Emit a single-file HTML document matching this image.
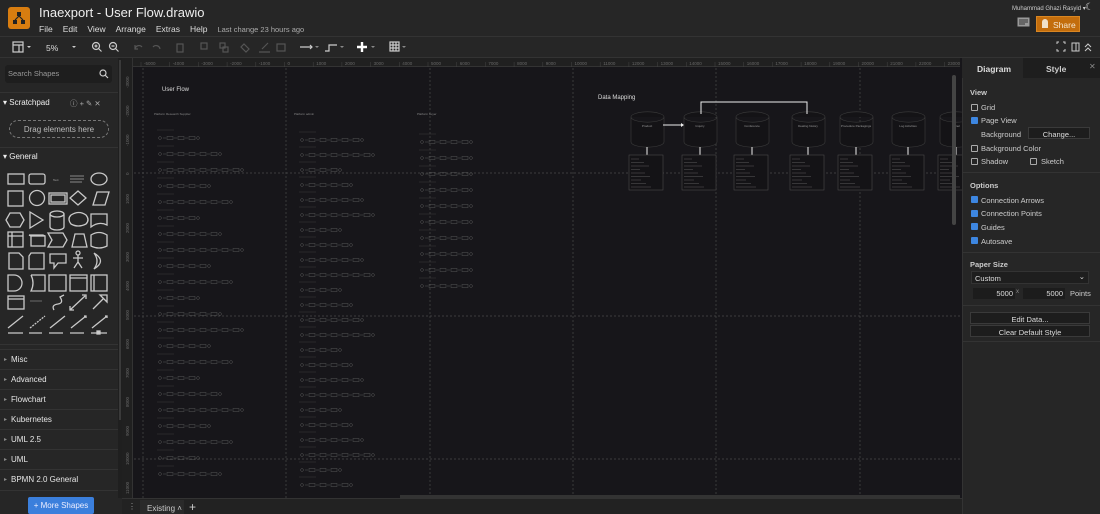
<!DOCTYPE html>
<html><head><meta charset="utf-8"><style>
*{box-sizing:border-box;margin:0;padding:0}
body{width:1100px;height:514px;overflow:hidden;background:#262626;font-family:"Liberation Sans",sans-serif;color:#ddd;position:relative;font-size:9px}
.a{position:absolute}
.menu span{margin-right:10px}
.sec{position:absolute;left:0;width:118px;height:20px;border-top:1px solid #333;font-size:8px;color:#e6e6e6;padding:5px 0 0 11px}
.sec:before{content:"▸";position:absolute;left:4px;color:#888;font-size:6px;top:6px}
.cb{position:absolute;width:7px;height:7px;border:1px solid #aaa;border-radius:1px}
.cb.on{background:#3d86e0;border-color:#3d86e0}
.rt{position:absolute;font-size:7.5px;color:#ccc}
.hdr{position:absolute;font-size:7.5px;font-weight:bold;color:#ccc}
.btn{position:absolute;background:#1d1d1d;border:1px solid #3a3a3a;color:#ddd;font-size:7.5px;text-align:center}
</style></head><body>
<div class="a" style="left:8px;top:7px;width:22px;height:22px;background:#d87d10;border-radius:3px"></div>
<svg class="a" style="left:10px;top:9px" width="18" height="18"><g fill="#222"><rect x="7" y="3" width="4" height="4"/><rect x="3" y="11" width="4" height="4"/><rect x="11" y="11" width="4" height="4"/></g><path d="M9 7L5 11M9 7L13 11" stroke="#222" stroke-width="1.2"/></svg>
<div class="a" style="left:39px;top:5px;font-size:13px;color:#eee">Inaexport - User Flow.drawio</div>
<div class="a menu" style="left:39px;top:24px;font-size:8.5px;color:#ddd;white-space:nowrap"><span>File</span><span>Edit</span><span>View</span><span>Arrange</span><span>Extras</span><span>Help</span><span style="font-size:7.5px;color:#aaa">Last change 23 hours ago</span></div>
<div class="a" style="left:1012px;top:5px;font-size:6px;color:#ccc">Muhammad Ghazi Rasyid ▾</div>
<div class="a" style="left:1085px;top:2px;font-size:10px;color:#ccc">☾</div>
<svg class="a" style="left:1017px;top:17px" width="13" height="12"><rect x="0.5" y="0.5" width="12" height="9" fill="#999"/><path d="M2 3h9M2 5h9M2 7h6" stroke="#333"/></svg>
<div class="a" style="left:1036px;top:16px;width:44px;height:16px;background:#c36d0c;border:1px solid #d98622;font-size:8.5px;color:#f5e6d0;padding:3px 0 0 16px">Share</div>
<div class="a" style="left:1042px;top:19px;width:6px;height:9px;background:#f0e0c8;border-radius:3px 3px 0 0"></div>
<div class="a" style="left:0;top:36px;width:1100px;height:1px;background:#333"></div>
<svg class="a" style="left:0;top:38px" width="420" height="20" fill="none" stroke="#ccc" stroke-width="1.2">
<rect x="13" y="4" width="10" height="10"/><path d="M13 7h10M19 7v7"/><path d="M27 8l2 2 2-2" fill="#ccc" stroke="none"/>
<text x="46" y="13" fill="#ddd" stroke="none" font-size="8.5" font-family="Liberation Sans">5%</text><path d="M72 8l2 2 2-2" fill="#ccc" stroke="none"/>
<circle cx="96" cy="8" r="3.5"/><path d="M98.5 10.5l3 3M94.5 8h3M96 6.5v3"/>
<circle cx="113" cy="8" r="3.5"/><path d="M115.5 10.5l3 3M111.5 8h3"/>
<g stroke="#555"><path d="M135 11a4 4 0 0 1 7-2M135 7v4h3"/><path d="M160 11a4 4 0 0 0-7-2"/><rect x="177" y="6" width="6" height="8"/><rect x="201" y="5" width="6" height="6"/><rect x="220" y="5" width="5" height="5"/><rect x="223" y="9" width="5" height="5"/><path d="M244 6l5 5-3 3-5-5z"/><path d="M259 14h11M262 11l6-6"/><rect x="277" y="6" width="8" height="7"/></g>
<path d="M300 9h12M310 7l2 2-2 2"/><path d="M325 13h4v-6h8"/><path d="M362 4v10M357 9h10" stroke-width="2.4" stroke="#fff"/>
<rect x="390" y="4" width="9" height="9"/><path d="M390 7h9M390 10h9M393 4v9M396 4v9"/>
<g fill="#888" stroke="none"><path d="M315 8l2 2 2-2z"/><path d="M340 8l2 2 2-2z"/><path d="M371 8l2 2 2-2z"/><path d="M402 8l2 2 2-2z"/></g>
</svg>
<svg class="a" style="left:1055px;top:40px" width="40" height="14" fill="none" stroke="#ccc"><path d="M2 4V2h2M8 2h2v2M10 9v2H8M4 11H2V9"/><rect x="17" y="3" width="7" height="8"/><path d="M21 3v8"/><path d="M30 7l3-3 3 3M30 11l3-3 3 3"/></svg>
<div class="a" style="left:0;top:57px;width:1100px;height:1px;background:#333"></div>
<div class="a" style="left:0;top:58px;width:118px;height:456px;background:#262626"></div>
<div class="a" style="left:5px;top:65px;width:107px;height:18px;background:#1e1e1e;border-radius:3px;font-size:7.5px;color:#999;padding:4px 0 0 3px">Search Shapes</div>
<svg class="a" style="left:99px;top:69px" width="10" height="10" fill="none" stroke="#ccc" stroke-width="1.2"><circle cx="4" cy="4" r="3"/><path d="M6 6l3 3"/></svg>
<div class="a" style="left:0;top:92px;width:118px;height:1px;background:#333"></div>
<div class="a" style="left:3px;top:98px;font-size:8px;color:#eee">▾ Scratchpad</div>
<div class="a" style="left:70px;top:98px;font-size:7.5px;color:#aaa">ⓘ + ✎ ✕</div>
<div class="a" style="left:9px;top:120px;width:100px;height:18px;border:1px dashed #777;border-radius:9px;font-size:8px;color:#bbb;text-align:center;padding-top:4px">Drag elements here</div>
<div class="a" style="left:0;top:147px;width:118px;height:1px;background:#333"></div>
<div class="a" style="left:3px;top:152px;font-size:8px;color:#eee">▾ General</div>
<svg class="a" style="left:0;top:165px" width="118" height="178" fill="none" stroke="#c9c9c9" stroke-width="1.3">
<rect x="8" y="9" width="16" height="10"/><rect x="29" y="9" width="16" height="10" rx="2"/><text x="53" y="16" fill="#aaa" stroke="none" font-size="3">Text</text><path d="M70 11h14M70 14h14M70 17h12" stroke="#888" stroke-width="1"/><ellipse cx="99" cy="14" rx="8" ry="6"/>
<rect x="8" y="26" width="15" height="15"/><circle cx="37" cy="33" r="7.5"/><rect x="49" y="28" width="18" height="11"/><rect x="51" y="30" width="14" height="7"/><path d="M78 26l8 7-8 7-8-7z"/><path d="M93 40l4-13h12l-4 13z"/>
<path d="M10 48h10l4 7-4 7H10l-4-7z"/><path d="M30 47l13 8-13 8z"/><path d="M50 49a7 3 0 0 1 14 0v13a7 3 0 0 1-14 0zM50 49a7 3 0 0 0 14 0"/><path d="M71 50q8-5 15 0q4 5 0 9q-8 4-15 0q-4-5 0-9"/><path d="M91 49h16v11q-8-4-16 2z"/>
<rect x="8" y="67" width="15" height="15"/><path d="M8 71h15M12 67v15"/><rect x="31" y="71" width="14" height="10"/><path d="M29 70l2 1M29 70h14l2 1"/><path d="M48 68h15l4 7-4 7H48l4-7z"/><path d="M72 82l3-13h9l3 13z"/><path d="M91 70q8-5 16 0v11q-8 4-16 0z"/>
<path d="M9 88h10l4 4v12H9z"/><path d="M31 88h13v16H29V91z"/><path d="M50 89h16v9h-8l-4 5v-5h-4z"/><circle cx="78" cy="88" r="2"/><path d="M78 90v7M73 93h10M78 97l-4 6M78 97l4 6"/><path d="M94 88q13 8 0 16q6-8 0-16"/>
<path d="M8 110h6a8 8 0 0 1 0 16H8z"/><path d="M31 110h14v16H31q4-8 0-16"/><rect x="49" y="110" width="17" height="16"/><rect x="70" y="110" width="17" height="16"/><path d="M70 113h17"/><rect x="91" y="110" width="16" height="16"/><path d="M94 110v16"/>
<rect x="8" y="131" width="16" height="13"/><path d="M8 134h16" /><path d="M30 136h12" stroke="#888" stroke-width="0.7"/><path d="M54 145q-3-5 4-6q6-1 2-7l4-2" /><path d="M70 145l15-14M82 130l4 0 0 4M70 141l0 4 4 0"/><path d="M93 144l10-10M100 130l7 0 0 7z"/>
<path d="M8 163l15-12M50 163l15-12M71 163l15-12M92 163l15-12M84 151l2 0 0 2M105 151l2 0 0 2"/><path d="M30 163l15-12" stroke-dasharray="2 1"/>
<path d="M8 168h15M29 168h13M49 168h14M70 168h14M91 168h16" /><rect x="97" y="166" width="3" height="3" fill="#ccc"/>
</svg>
<div class="a" style="left:0;top:344px;width:118px;height:1px;background:#333"></div>
<div class="sec" style="top:349px">Misc</div><div class="sec" style="top:369px">Advanced</div><div class="sec" style="top:389px">Flowchart</div><div class="sec" style="top:409px">Kubernetes</div><div class="sec" style="top:429px">UML 2.5</div><div class="sec" style="top:449px">UML</div><div class="sec" style="top:469px">BPMN 2.0 General</div>
<div class="a" style="left:0;top:490px;width:118px;height:1px;background:#333"></div>
<div class="a" style="left:28px;top:497px;width:66px;height:17px;background:#3b7fdc;border-radius:2px;font-size:8px;color:#eef;text-align:center;padding-top:4px">+ More Shapes</div>
<div class="a" style="left:118px;top:58px;width:4px;height:440px;background:#1f1f1f"></div>
<div class="a" style="left:119px;top:60px;width:2px;height:360px;background:#3a3a3a"></div>
<div class="a" style="left:122px;top:58px;width:840px;height:440px;background:#17161a"></div>
<div class="a" style="left:133px;top:58px;width:827px;height:9px;background:#202020;border-bottom:1px solid #333"></div>
<div class="a" style="left:122px;top:58px;width:11px;height:440px;background:#202020;border-right:1px solid #333"></div>
<svg class="a" style="left:122px;top:58px" width="840" height="440" id="cv" font-family="Liberation Sans"></svg>
<div class="a" style="left:952px;top:75px;width:4px;height:150px;background:#444;border-radius:2px"></div>
<div class="a" style="left:400px;top:495px;width:560px;height:3px;background:#333"></div>
<div class="a" style="left:122px;top:498px;width:840px;height:16px;background:#222;border-top:1px solid #333"></div>
<div class="a" style="left:128px;top:502px;font-size:8px;color:#999">⋮</div>
<div class="a" style="left:140px;top:500px;width:44px;height:14px;background:#2a2a2a;font-size:8px;color:#ccc;padding:4px 0 0 7px">Existing ˄</div>
<div class="a" style="left:189px;top:500px;font-size:12px;color:#ccc">+</div>
<div class="a" style="left:962px;top:58px;width:138px;height:456px;background:#262626;border-left:1px solid #333"></div>
<div class="a" style="left:962px;top:58px;width:61px;height:20px;background:#262626;font-size:8.5px;font-weight:bold;color:#ddd;padding:6px 0 0 15px">Diagram</div>
<div class="a" style="left:1023px;top:58px;width:77px;height:20px;background:#1e1e1e;font-size:8.5px;font-weight:bold;color:#ccc;padding:6px 0 0 23px">Style</div>
<div class="a" style="left:1089px;top:62px;font-size:8px;color:#888">✕</div>
<div class="hdr" style="left:970px;top:88px">View</div>
<div class="cb" style="left:971px;top:104px"></div><div class="rt" style="left:981px;top:103px">Grid</div>
<div class="cb on" style="left:971px;top:117px"></div><div class="rt" style="left:981px;top:116px">Page View</div>
<div class="rt" style="left:981px;top:130px">Background</div>
<div class="btn" style="left:1028px;top:127px;width:62px;height:12px;padding-top:2px">Change...</div>
<div class="cb" style="left:971px;top:145px"></div><div class="rt" style="left:981px;top:144px">Background Color</div>
<div class="cb" style="left:971px;top:158px"></div><div class="rt" style="left:981px;top:157px">Shadow</div>
<div class="cb" style="left:1030px;top:158px"></div><div class="rt" style="left:1041px;top:157px">Sketch</div>
<div class="a" style="left:962px;top:172px;width:138px;height:1px;background:#333"></div>
<div class="hdr" style="left:970px;top:181px">Options</div>
<div class="cb on" style="left:971px;top:196px"></div><div class="rt" style="left:981px;top:196px">Connection Arrows</div>
<div class="cb on" style="left:971px;top:210px"></div><div class="rt" style="left:981px;top:209px">Connection Points</div>
<div class="cb on" style="left:971px;top:223px"></div><div class="rt" style="left:981px;top:223px">Guides</div>
<div class="cb on" style="left:971px;top:237px"></div><div class="rt" style="left:981px;top:237px">Autosave</div>
<div class="a" style="left:962px;top:252px;width:138px;height:1px;background:#333"></div>
<div class="hdr" style="left:970px;top:260px">Paper Size</div>
<div class="a" style="left:971px;top:271px;width:118px;height:13px;background:#1e1e1e;border:1px solid #333;font-size:7.5px;color:#ddd;padding:2px 0 0 3px">Custom<span style="position:absolute;right:3px;top:0">⌄</span></div>
<div class="a" style="left:973px;top:288px;width:42px;height:11px;background:#1c1c1c;font-size:7.5px;color:#ddd;text-align:right;padding:1px 2px 0 0">5000</div>
<div class="a" style="left:1016px;top:289px;font-size:6px;color:#888">x</div>
<div class="a" style="left:1023px;top:288px;width:42px;height:11px;background:#1c1c1c;font-size:7.5px;color:#ddd;text-align:right;padding:1px 2px 0 0">5000</div>
<div class="rt" style="left:1070px;top:289px">Points</div>
<div class="a" style="left:962px;top:305px;width:138px;height:1px;background:#333"></div>
<div class="btn" style="left:970px;top:312px;width:120px;height:12px;padding-top:2px">Edit Data...</div>
<div class="btn" style="left:970px;top:325px;width:120px;height:12px;padding-top:2px">Clear Default Style</div>
<div class="a" style="left:962px;top:341px;width:138px;height:1px;background:#333"></div>
<script>
var s='';
var labs=['-5000','-4000','-3000','-2000','-1000','0','1000','2000','3000','4000','5000','6000','7000','8000','9000','10000','11000','12000','13000','14000','15000','16000','17000','18000','19000','20000','21000','22000','23000'];
for(var i=0;i<labs.length;i++){var x=22+i*28.7;s+='<text x="'+x+'" y="7" fill="#666" font-size="4.5">'+labs[i]+'</text><line x1="'+(x-3)+'" y1="4" x2="'+(x-3)+'" y2="9" stroke="#444" stroke-width=".5"/>';}
for(var j=0;j<15;j++){var y=30+j*29;s+='<text x="7" y="'+y+'" fill="#666" font-size="4.5" transform="rotate(-90 7 '+y+')">'+(j*1000-3000)+'</text>';}
[21,164,308,451,594,738].forEach(function(x){s+='<line x1="'+x+'" y1="10" x2="'+x+'" y2="440" stroke="#4a4a4a" stroke-width=".7" stroke-dasharray="2 2"/>';});
[115,258,401].forEach(function(y){s+='<line x1="12" y1="'+y+'" x2="840" y2="'+y+'" stroke="#4a4a4a" stroke-width=".7" stroke-dasharray="2 2"/>';});
s+='<text x="40" y="33" fill="#ddd" font-size="6">User Flow</text><text x="476" y="41" fill="#ddd" font-size="6">Data Mapping</text>';
function row(x,y,n){var c='#5e5e5e';var r='<circle cx="'+x+'" cy="'+y+'" r="1.4" fill="none" stroke="'+c+'" stroke-width=".45"/>';var cx=x+3;for(var k=0;k<n;k++){r+='<line x1="'+cx+'" y1="'+y+'" x2="'+(cx+3)+'" y2="'+y+'" stroke="'+c+'" stroke-width=".45"/><rect x="'+(cx+4)+'" y="'+(y-1.5)+'" width="6" height="3" fill="none" stroke="'+c+'" stroke-width=".45"/>';cx+=11;}r+='<circle cx="'+(cx+2)+'" cy="'+y+'" r="1.4" fill="none" stroke="'+c+'" stroke-width=".45"/>';r+='<line x1="'+(x-3)+'" y1="'+(y-8)+'" x2="'+(x+14)+'" y2="'+(y-8)+'" stroke="#3a3a3a" stroke-width=".5"/>';return r;}
var y;for(y=80;y<430;y+=16)s+=row(38,y,(y*7)%5+3);
for(y=82;y<435;y+=15)s+=row(180,y,(y*3)%4+3);
for(y=84;y<240;y+=16)s+=row(300,y,(y*5)%4+4);
s+='<text x="32" y="57" fill="#888" font-size="3">Platform Research Supplier</text><text x="172" y="57" fill="#888" font-size="3">Platform admin</text><text x="295" y="57" fill="#888" font-size="3">Platform buyer</text>';
var cyl=[[509,'Product'],[562,'Inquiry'],[614,'Conference'],[670,'Dealing history'],[718,'Procedure Packagings'],[770,'Log Activities'],[818,'Panel']];
cyl.forEach(function(c){var x=c[0];s+='<path d="M'+x+' 59a16 5 0 0 1 33 0v25a16 5 0 0 1-33 0zM'+x+' 59a16 5 0 0 0 33 0" fill="#141316" stroke="#3c3c3c" stroke-width=".6"/><text x="'+(x+16)+'" y="69" fill="#999" font-size="3" text-anchor="middle">'+c[1]+'</text><line x1="'+(x+16)+'" y1="89" x2="'+(x+16)+'" y2="97" stroke="#ccc" stroke-width="1.2"/><rect x="'+(x-2)+'" y="97" width="34" height="35" fill="#141316" stroke="#4a4a4a" stroke-width=".6"/>';for(var q=0;q<9;q++)s+='<line x1="'+x+'" y1="'+(101+q*3.5)+'" x2="'+(x+8+(q*5)%14)+'" y2="'+(101+q*3.5)+'" stroke="#5a5a5a" stroke-width=".5"/>';});
s+='<path d="M541 67h20" stroke="#eee" stroke-width="1"/><path d="M559 65l3 2-3 2z" fill="#eee"/>';
s+='<path d="M579 56v-12h106v12" fill="none" stroke="#eee" stroke-width="1"/><line x1="832" y1="18" x2="832" y2="44" stroke="#eee" stroke-width="1.2"/>';
document.getElementById('cv').innerHTML=s;
</script>
</body></html>
